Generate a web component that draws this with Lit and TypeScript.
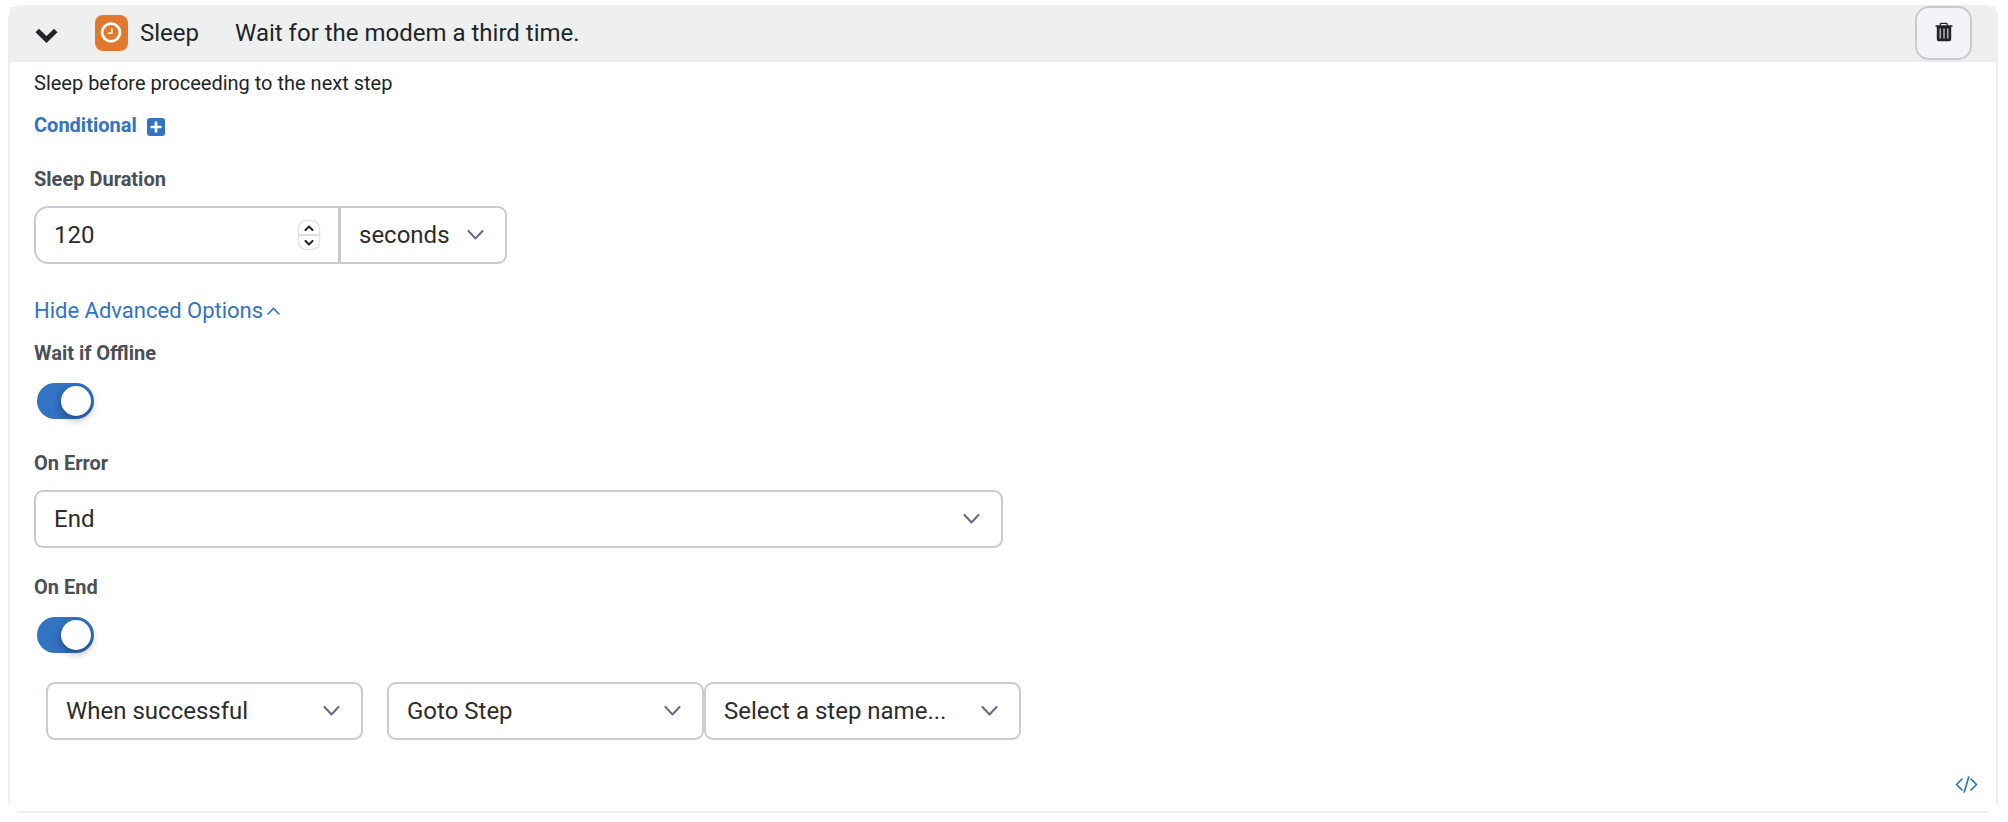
import { LitElement, html, css, svg } from "lit";
import { customElement, state } from "lit/decorators.js";

const chevronDown = html`<svg class="chevron" viewBox="0 0 16 10" aria-hidden="true">
  <path d="M1 1 8 8.5 15 1" fill="none" stroke="currentColor" stroke-width="2" stroke-linecap="round" stroke-linejoin="round" />
</svg>`;

@customElement("app-root")
export class AppRoot extends LitElement {
  static styles = css`
    :host {
      display: block;
      padding: 5px 10px 8px 8px;
      font-family: Roboto, "Liberation Sans", sans-serif;
      font-size: 20px;
      line-height: 30px;
      color: #212529;
      --line: #c6ccd1;
      --blue: #3273c4;
    }
    *,
    *::before {
      box-sizing: border-box;
    }
    button,
    input,
    select {
      font: inherit;
      color: inherit;
      margin: 0;
    }
    button {
      display: flex;
      align-items: center;
      justify-content: center;
      padding: 0;
      border: 0;
      background: none;
      cursor: pointer;
    }
    svg {
      display: block;
      flex: none;
    }
    .card {
      border: 2px solid #ededf3;
      border-radius: 14px;
      background: #fff;
    }
    .header {
      display: flex;
      align-items: center;
      height: 55px;
      padding: 0 24px;
      border-bottom: 2px solid #ebebf2;
      background: #eef0f0;
      font-size: 24px;
      line-height: 36px;
    }
    .toggle-step {
      width: 25px;
      height: 36px;
      margin-right: 36px;
      padding-top: 4px;
    }
    .badge {
      display: flex;
      align-items: center;
      justify-content: center;
      width: 33px;
      height: 36px;
      margin: 0 12px 1px 0;
      border-radius: 8px;
      background: #e2782e;
    }
    .badge svg {
      width: 23px;
      height: 23px;
    }
    .header-text {
      display: flex;
      flex: 1;
      gap: 36px;
      align-items: center;
      padding-bottom: 1px;
    }
    .title {
      margin: 0;
      font-size: inherit;
      font-weight: 400;
    }
    .trash {
      align-self: flex-end;
      width: 57px;
      height: 54px;
      padding-bottom: 2px;
      border: 2px solid var(--line);
      border-radius: 14px;
      background: #f3f4f9;
    }
    .body {
      padding: 6px 24px 18px;
      background: #fff;
    }
    .description {
      margin: 0 0 12px;
    }
    .conditional {
      gap: 10px;
      margin-bottom: 24px;
      font-weight: 700;
      color: var(--blue);
    }
    .conditional svg {
      margin-top: 4px;
    }
    .field {
      display: flex;
      flex-direction: column;
      align-items: flex-start;
      gap: 12px;
      margin-bottom: 24px;
    }
    .label {
      font-weight: 700;
      color: #495057;
    }
    .half {
      width: 50%;
    }
    .control {
      display: grid;
      align-items: center;
      width: 100%;
      font-size: 24px;
      color: #2c2c2e;
    }
    .control > * {
      grid-area: 1 / 1;
    }
    .box {
      width: 100%;
      height: 58px;
      padding: 0 48px 0 18px;
      border: 2px solid var(--line);
      border-radius: 9px;
      background: #fff;
      appearance: none;
      -moz-appearance: textfield;
      text-overflow: ellipsis;
    }
    .box::-webkit-inner-spin-button {
      appearance: none;
      margin: 0;
    }
    .chevron {
      justify-self: end;
      width: 17px;
      height: 10px;
      margin-right: 23px;
      color: #626c84;
      pointer-events: none;
    }
    .duration {
      display: flex;
    }
    .amount {
      width: 306px;
    }
    .amount .box {
      border-radius: 14px 0 0 14px;
    }
    .unit {
      width: 168px;
      margin-left: -1px;
    }
    .unit .box {
      padding-right: 40px;
      border-radius: 0 9px 9px 0;
    }
    .spinner {
      display: flex;
      flex-direction: column;
      justify-self: end;
      width: 20px;
      height: 28px;
      margin-right: 21px;
      border-radius: 7px;
      background: #fff;
      box-shadow: 0 0 2px rgba(0, 0, 0, 0.45);
    }
    .spinner button {
      flex: 1;
    }
    .spinner button + button {
      border-top: 2px solid #dedede;
    }
    .advanced {
      gap: 4px;
      margin: 32px 0 12px;
      font-size: 22px;
      color: var(--blue);
    }
    .switch {
      width: 57px;
      height: 36px;
      margin: 3px 3px 5px;
      padding: 3px;
      border-radius: 18px;
      background: #adb5bd;
      appearance: none;
      cursor: pointer;
    }
    .switch::before {
      content: "";
      display: block;
      width: 30px;
      height: 30px;
      border-radius: 50%;
      background: #fff;
      box-shadow: 0 3px 8px rgba(0, 0, 0, 0.4);
    }
    .switch:checked {
      background: var(--blue);
    }
    .switch:checked::before {
      margin-left: 21px;
    }
    .rule {
      display: flex;
      padding-left: 12px;
    }
    .rule .control {
      flex: 0 1 317px;
      min-width: 0;
    }
    .rule .control:first-child {
      margin-right: 24px;
    }
    .footer {
      display: flex;
      justify-content: flex-end;
      padding-top: 36px;
    }
    .code {
      margin-right: -6px;
      color: var(--blue);
    }
  `;

  @state() private advanced = true;
  @state() private open = true;
  @state() private seconds = 120;

  private select(label: string, options: string[], id?: string, extra = "") {
    return html`<div class="control ${extra}">
      <select class="box" id=${id ?? label.toLowerCase().replace(/ /g, "-")} aria-label=${label}>
        ${options.map((o) => html`<option>${o}</option>`)}
      </select>
      ${chevronDown}
    </div>`;
  }

  private step(by: number) {
    this.seconds = Math.max(0, this.seconds + by);
  }

  private arrow(d: string) {
    return html`<svg width="10" height="6" viewBox="0 0 10 6" aria-hidden="true">
      ${svg`<path d=${d} fill="none" stroke="#222" stroke-width="2" stroke-linecap="round" stroke-linejoin="round" />`}
    </svg>`;
  }

  private renderAdvanced() {
    return html`
      <div class="field">
        <label class="label" for="offline">Wait if Offline</label>
        <input class="switch" id="offline" type="checkbox" role="switch" checked />
      </div>
      <div class="field half">
        <label class="label" for="on-error">On Error</label>
        ${this.select("On Error", ["End", "Continue"], "on-error")}
      </div>
      <div class="field">
        <label class="label" for="on-end">On End</label>
        <input class="switch" id="on-end" type="checkbox" role="switch" checked />
      </div>
      <div class="rule">
        ${this.select("Condition", ["When successful", "Always"])}
        ${this.select("Action", ["Goto Step", "End"])}
        ${this.select("Step name", ["Select a step name..."])}
      </div>
    `;
  }

  render() {
    return html`
      <section class="card">
        <header class="header">
          <button class="toggle-step" aria-label="Toggle step" aria-expanded=${this.open} @click=${() => (this.open = !this.open)}>
            <svg width="23" height="16" viewBox="0 0 23 16" aria-hidden="true">
              <path d="M4 4.2 11.5 11.5 19 4.2" fill="none" stroke="#212529" stroke-width="5" stroke-linecap="square" stroke-linejoin="miter" />
            </svg>
          </button>
          <span class="badge">
            <svg viewBox="0 0 23 23" aria-hidden="true">
              <circle cx="11" cy="10.5" r="8.9" fill="none" stroke="#fff" stroke-width="2.8" />
              <path d="M11.8 6V11.3H7.8" fill="none" stroke="#fff" stroke-width="1.5" />
            </svg>
          </span>
          <div class="header-text">
            <h2 class="title">Sleep</h2>
            <span>Wait for the modem a third time.</span>
          </div>
          <button class="trash" aria-label="Delete step">
            <svg width="18" height="20" viewBox="0 0 18 20" aria-hidden="true">
              <path d="M5.3 3.5V2.4Q5.3 1.3 6.5 1.3H11.1Q12.3 1.3 12.3 2.4V3.5" fill="none" stroke="#212529" stroke-width="1.3" />
              <path d="M.5 3.3H17.5V4.8H16.2V17Q16.2 19.3 14 19.3H4Q1.8 19.3 1.8 17V4.8H.5Z" fill="#212529" />
              <path d="M5.2 6.5V16.5M9 6.5V16.5M12.8 6.5V16.5" stroke="#d3d4d8" stroke-width="1.2" />
            </svg>
          </button>
        </header>
        ${this.open
          ? html`<div class="body">
              <p class="description">Sleep before proceeding to the next step</p>
              <button class="conditional">
                Conditional
                <svg width="18" height="18" viewBox="0 0 18 18" aria-hidden="true">
                  <rect width="18" height="18" rx="3" fill="currentColor" />
                  <path d="M9 3.5V14.5M3.5 9H14.5" stroke="#fff" stroke-width="2.6" />
                </svg>
              </button>
              <div class="field">
                <label class="label" for="duration">Sleep Duration</label>
                <div class="duration">
                  <div class="control amount">
                    <input
                      class="box"
                      id="duration"
                      type="number"
                      .value=${String(this.seconds)}
                      @input=${(e: Event) => (this.seconds = Number((e.target as HTMLInputElement).value))}
                    />
                    <div class="spinner">
                      <button aria-label="Increase" @click=${() => this.step(1)}>${this.arrow("M1.5 5 5 1.5 8.5 5")}</button>
                      <button aria-label="Decrease" @click=${() => this.step(-1)}>${this.arrow("M1.5 1 5 4.5 8.5 1")}</button>
                    </div>
                  </div>
                  ${this.select("Unit", ["seconds", "minutes", "hours"], "unit", "unit")}
                </div>
              </div>
              <button class="advanced" aria-expanded=${this.advanced} @click=${() => (this.advanced = !this.advanced)}>
                ${this.advanced ? "Hide" : "Show"} Advanced Options
                <svg width="13" height="8" viewBox="0 0 13 8" aria-hidden="true">
                  <path d="M1 7 6.5 1.5 12 7" fill="none" stroke="currentColor" stroke-width="1.6" stroke-linecap="round" />
                </svg>
              </button>
              ${this.advanced ? this.renderAdvanced() : ""}
              <div class="footer">
                <button class="code" aria-label="View code">
                  <svg width="23" height="17" viewBox="0 0 23 17" aria-hidden="true">
                    <path d="M7 3 1.5 8.5 7 14M16 3 21.5 8.5 16 14M13.7 1 9.3 16" fill="none" stroke="currentColor" stroke-width="1.7" stroke-linecap="round" stroke-linejoin="round" />
                  </svg>
                </button>
              </div>
            </div>`
          : ""}
      </section>
    `;
  }
}
